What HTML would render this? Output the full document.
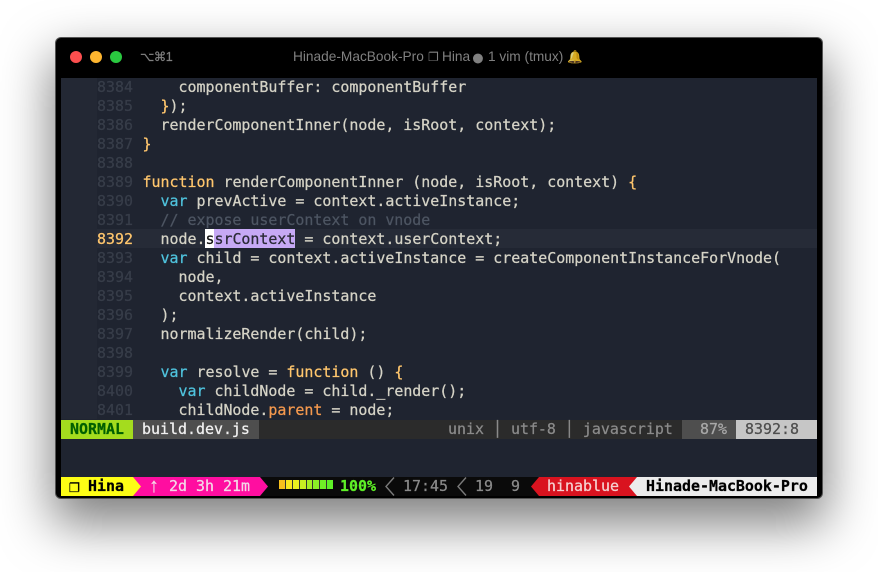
<!DOCTYPE html>
<html><head><meta charset="utf-8"><style>
html,body{margin:0;padding:0;background:#fff;width:878px;height:572px;overflow:hidden}
#win{position:absolute;left:56px;top:38px;width:766px;height:460px;background:#000;border-radius:5px;box-shadow:0 0 0 1px #555,0 22px 50px 4px rgba(0,0,0,.5)}
#ed{position:absolute;left:61px;top:78px;width:756px;height:399px;background:#1f2430;overflow:hidden}
#gut{position:absolute;left:61px;top:78px;width:36px;height:341px;background:#232834}
#cur{position:absolute;left:97px;top:229px;width:720px;height:19px;background:#262b37}
.l,.n,.t{position:absolute;font-family:"DejaVu Sans Mono","Liberation Mono",monospace;font-size:14.95px;line-height:19px;height:19px;white-space:pre;-webkit-text-stroke:0.25px currentColor}
.n{left:97px;color:#373d49}
.l{left:142.5px;color:#d5d3c6}
.k{color:#4fc3dd}.f{color:#ffc66d}.p{color:#f5994e}.c{color:#4d5562}
.b{position:absolute;height:19px}
.bold{font-weight:bold}
.dot{position:absolute;width:12px;height:12px;border-radius:50%;top:51px}
.ti{position:absolute;font-family:"Liberation Sans",sans-serif;font-size:13.7px;color:#808080;top:49px;line-height:16px;white-space:pre}
</style></head><body>
<div id="win"></div>
<div id="ed"></div><div id="gut"></div><div id="cur"></div>
<div class="dot" style="left:70px;background:#fc4f4f"></div>
<div class="dot" style="left:90px;background:#fdb52f"></div>
<div class="dot" style="left:110px;background:#2ac940"></div>
<div class="ti" style="left:140px;font-size:12.5px;letter-spacing:-.6px;-webkit-text-stroke:.2px currentColor">⌥⌘1</div>
<div class="ti" style="left:293px">Hinade-MacBook-Pro</div>
<div class="ti" style="left:428px;font-size:12px">❐</div>
<div class="ti" style="left:442px">Hina</div>
<div class="ti" style="left:471px;font-size:23px">●</div>
<div class="ti" style="left:488px">1 vim (tmux)</div>
<div class="ti" style="left:567px;font-size:12.5px;color:#e0a92e;opacity:.85">🔔</div>

<div class="n" style="top:78px">8384</div><div class="l" style="top:78px">    componentBuffer: componentBuffer</div>
<div class="n" style="top:97px">8385</div><div class="l" style="top:97px">  <span class="f">}</span>);</div>
<div class="n" style="top:116px">8386</div><div class="l" style="top:116px">  renderComponentInner(node, isRoot, context);</div>
<div class="n" style="top:135px">8387</div><div class="l" style="top:135px"><span class="f">}</span></div>
<div class="n" style="top:154px">8388</div>
<div class="n" style="top:173px">8389</div><div class="l" style="top:173px"><span class="f">function</span> renderComponentInner (node, isRoot, context) <span class="f">{</span></div>
<div class="n" style="top:192px">8390</div><div class="l" style="top:192px">  <span class="k">var</span> prevActive = context.activeInstance;</div>
<div class="n" style="top:211px">8391</div><div class="l c" style="top:211px;color:#4d5562">  // expose userContext on vnode</div>
<div class="b" style="left:205px;top:229px;width:9px;height:19px;background:#fff"></div>
<div class="b" style="left:214px;top:229px;width:81px;height:19px;background:#c6a9f5"></div>
<div class="n" style="top:230px;color:#ffc66d">8392</div><div class="l" style="top:230px">  node.<span style="color:#111">s</span><span style="color:#2a2a36">srContext</span> = context.userContext;</div>
<div class="n" style="top:249px">8393</div><div class="l" style="top:249px">  <span class="k">var</span> child = context.activeInstance = createComponentInstanceForVnode(</div>
<div class="n" style="top:268px">8394</div><div class="l" style="top:268px">    node,</div>
<div class="n" style="top:287px">8395</div><div class="l" style="top:287px">    context.activeInstance</div>
<div class="n" style="top:306px">8396</div><div class="l" style="top:306px">  );</div>
<div class="n" style="top:325px">8397</div><div class="l" style="top:325px">  normalizeRender(child);</div>
<div class="n" style="top:344px">8398</div>
<div class="n" style="top:363px">8399</div><div class="l" style="top:363px">  <span class="k">var</span> resolve = <span class="f">function</span> () <span class="f">{</span></div>
<div class="n" style="top:382px">8400</div><div class="l" style="top:382px">    <span class="k">var</span> childNode = child._render();</div>
<div class="n" style="top:401px;height:18px;overflow:hidden">8401</div><div class="l" style="top:401px;height:18px;overflow:hidden">    childNode.<span class="p">parent</span> = node;</div>

<div class="b" style="left:61px;top:420px;width:756px;background:#2b2b2b"></div>
<div class="b" style="left:61px;top:420px;width:72px;background:#a4dc1e"></div>
<div class="t bold" style="left:70px;top:420px;color:#005f00">NORMAL</div>
<div class="b" style="left:133px;top:420px;width:126px;background:#4e4e4e"></div>
<div class="t" style="left:142px;top:420px;color:#f0f0f0">build.dev.js</div>
<div class="t" style="left:448px;top:420px;color:#8a8a8a">unix │ utf-8 │ javascript</div>
<div class="b" style="left:682px;top:420px;width:54px;background:#4e4e4e"></div>
<div class="t" style="left:700px;top:420px;color:#a8a8a8">87%</div>
<div class="b" style="left:736px;top:420px;width:81px;background:#c6c6c6"></div>
<div class="t" style="left:745px;top:420px;color:#4e4e4e">8392:8</div>

<div class="b" style="left:61px;top:477px;width:756px;background:#0a0a0a"></div>
<svg style="position:absolute;left:0;top:0" width="878" height="572">
<polygon points="61,477 134,477 142,486.5 134,496 61,496" fill="#fdfd15"/>
<polygon points="133,477 260,477 268,486.5 260,496 133,496 141,486.5" fill="#ff0ea0"/>
<g>
<rect x="279" y="480" width="54" height="9" fill="#333"/>
<rect x="279" y="480" width="6" height="9" fill="#f7c01c"/>
<rect x="286" y="480" width="6" height="9" fill="#f8e81f"/>
<rect x="293" y="480" width="6" height="9" fill="#eaf11f"/>
<rect x="300" y="480" width="6" height="9" fill="#c8f022"/>
<rect x="307" y="480" width="5" height="9" fill="#a5f024"/>
<rect x="313" y="480" width="6" height="9" fill="#8cf025"/>
<rect x="320" y="480" width="6" height="9" fill="#70f026"/>
<rect x="327" y="480" width="6" height="9" fill="#5ef027"/>
</g>
<path d="M394 477.5 L386 486.5 L394 495.5" fill="none" stroke="#7a7a7a" stroke-width="1.4"/>
<path d="M466 477.5 L458 486.5 L466 495.5" fill="none" stroke="#7a7a7a" stroke-width="1.4"/>
<polygon points="539,477 817,477 817,496 539,496 531,486.5" fill="#d9131f"/>
<polygon points="637,477 817,477 817,496 637,496 629,486.5" fill="#ececec"/>
</svg>
<div class="t bold" style="left:69px;top:477px;color:#000;font-size:18px">❐</div>
<div class="t bold" style="left:88px;top:477px;color:#000">Hina</div>
<div class="t" style="left:149px;top:477px;color:#f4d8e8;font-family:'Liberation Sans',sans-serif;font-size:20px">↑</div>
<div class="t" style="left:169px;top:477px;color:#f4d8e8">2d 3h 21m</div>
<div class="t bold" style="left:340px;top:477px;color:#5ef027">100%</div>
<div class="t" style="left:403px;top:477px;color:#8a8a8a">17:45</div>
<div class="t" style="left:475px;top:477px;color:#8a8a8a">19</div>
<div class="t" style="left:511px;top:477px;color:#8a8a8a">9</div>
<div class="t" style="left:547px;top:477px;color:#f5d0d0">hinablue</div>
<div class="t bold" style="left:646px;top:477px;color:#000">Hinade-MacBook-Pro</div>
</body></html>
